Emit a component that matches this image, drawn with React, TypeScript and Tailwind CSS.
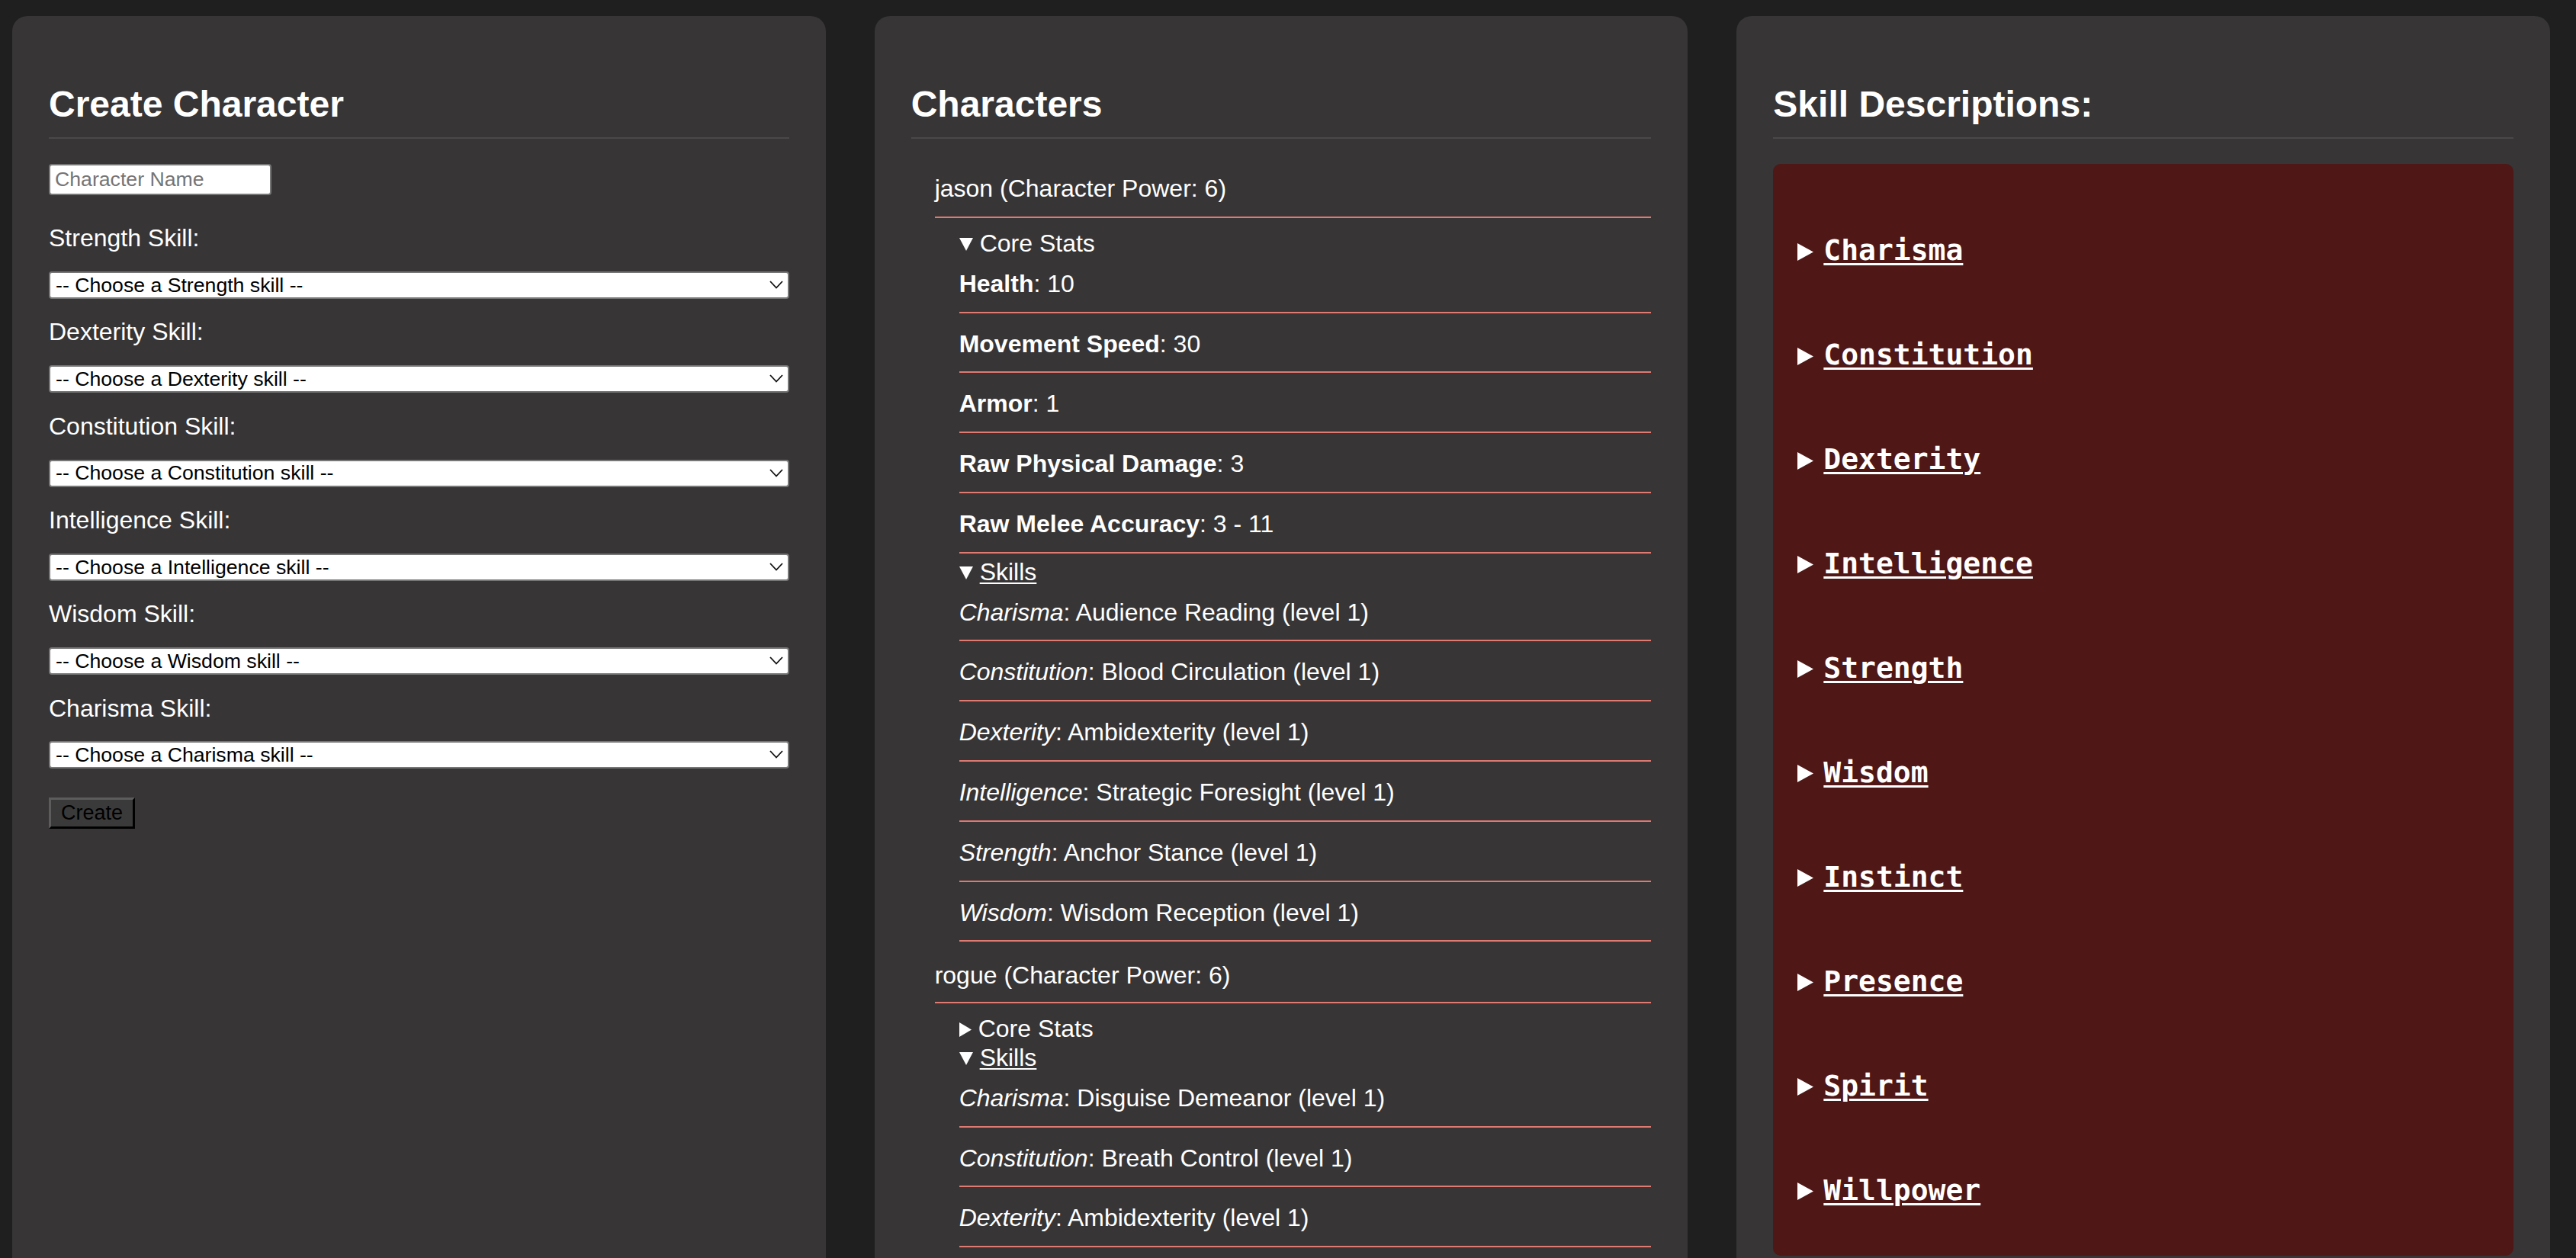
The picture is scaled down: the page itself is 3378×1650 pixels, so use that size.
const stats = [
  ['Health', '10'],
  ['Movement Speed', '30'],
  ['Armor', '1'],
  ['Raw Physical Damage', '3'],
  ['Raw Melee Accuracy', '3 - 11'],
];

const characters = [
  {
    name: 'jason',
    power: 6,
    statsOpen: true,
    skills: [
      ['Charisma', 'Audience Reading'],
      ['Constitution', 'Blood Circulation'],
      ['Dexterity', 'Ambidexterity'],
      ['Intelligence', 'Strategic Foresight'],
      ['Strength', 'Anchor Stance'],
      ['Wisdom', 'Wisdom Reception'],
    ],
  },
  {
    name: 'rogue',
    power: 6,
    statsOpen: false,
    skills: [
      ['Charisma', 'Disguise Demeanor'],
      ['Constitution', 'Breath Control'],
      ['Dexterity', 'Ambidexterity'],
    ],
  },
];

const attributes = ['Strength', 'Dexterity', 'Constitution', 'Intelligence', 'Wisdom', 'Charisma'];

const descriptions = [
  'Charisma',
  'Constitution',
  'Dexterity',
  'Intelligence',
  'Strength',
  'Wisdom',
  'Instinct',
  'Presence',
  'Spirit',
  'Willpower',
];

function PanelTitle({ children }: { children: React.ReactNode }) {
  return (
    <h2 className="mt-[40px] mb-[33px] pb-[16px] border-b-2 border-[#4a4849] text-[48px] font-bold">
      {children}
    </h2>
  );
}

function TriDown() {
  return (
    <svg width="18" height="17" viewBox="0 0 18 17" className="shrink-0 translate-y-[1px]">
      <path d="M0 0h18L9 17z" fill="white" />
    </svg>
  );
}

function TriRight({ w = 16, h = 19 }: { w?: number; h?: number }) {
  return (
    <svg width={w} height={h} viewBox={`0 0 ${w} ${h}`} className="shrink-0 translate-y-[1px]">
      <path d={`M0 0L${w} ${h / 2}L0 ${h}z`} fill="white" />
    </svg>
  );
}

function Row({ first, children }: { first?: boolean; children: React.ReactNode }) {
  return (
    <li className={`${first ? 'pt-[16px]' : 'pt-[22px]'} pb-[18px] border-b-2 border-[#df7a72]`}>
      {children}
    </li>
  );
}

export default function App() {
  return (
    <div className="h-[1650px] overflow-hidden bg-[#1f1f1f] text-white font-['Liberation_Sans',Arial,sans-serif] text-[32px] leading-[1.15]">
      <div className="grid grid-cols-3 gap-x-[64px] pl-[16px] pr-[34px] pt-[21px]">
        {/* create form */}
        <section className="min-h-[1700px] rounded-[20px] bg-[#373536] px-[48px] pt-[48px]">
          <PanelTitle>Create Character</PanelTitle>
          <input
            placeholder="Character Name"
            className="block w-[292px] h-[41px] rounded-[4px] border-2 border-[#767676] bg-white px-[6px] text-[26.67px] text-black placeholder:text-[#757575]"
          />
          <div className="mt-[12.5px]">
            {attributes.map((a) => (
              <div key={a} className="pt-[25.5px]">
                <label className="block">{a} Skill:</label>
                <div className="relative mt-[25px]">
                  <select className="block w-full h-[36px] appearance-none rounded-[4px] border-2 border-[#767676] bg-white pl-[7px] text-[26.67px] text-black">
                    <option>-- Choose a {a} skill --</option>
                  </select>
                  <svg
                    viewBox="0 0 18 11"
                    className="pointer-events-none absolute right-[8px] top-[12px] w-[18px] h-[11px]"
                  >
                    <path d="M1 1l8 8.5L17 1" stroke="#111" strokeWidth="1.8" fill="none" />
                  </svg>
                </div>
              </div>
            ))}
          </div>
          <button className="mt-[38px] h-[41px] px-[13px] bg-[#3a3a3a] text-black text-[27px] border-[3px] border-t-[#5c5c5c] border-l-[#5c5c5c] border-b-black border-r-black">
            Create
          </button>
        </section>

        {/* characters */}
        <section className="min-h-[1700px] rounded-[20px] bg-[#373536] px-[48px] pt-[48px]">
          <PanelTitle>Characters</PanelTitle>
          <ul className="pl-[31px]">
            {characters.map((c, ci) => (
              <li key={c.name}>
                <div
                  className={`${ci === 0 ? 'pt-[14px] pb-[18px]' : 'pt-[26px] pb-[16px]'} border-b-2 border-[#df7a72]`}
                >
                  {c.name} (Character Power: {c.power})
                </div>
                <div className="pl-[32px]">
                  <div className="mt-[15px] flex items-center gap-[9px]">
                    {c.statsOpen ? <TriDown /> : <TriRight />}
                    <span>Core Stats</span>
                  </div>
                  {c.statsOpen && (
                    <ul>
                      {stats.map(([k, v], i) => (
                        <Row key={k} first={i === 0}>
                          <b>{k}</b>: {v}
                        </Row>
                      ))}
                    </ul>
                  )}
                  <div className={`${c.statsOpen ? 'mt-[6px]' : 'mt-[1px]'} flex items-center gap-[9px]`}>
                    <TriDown />
                    <span className="underline decoration-2 underline-offset-[3px]">Skills</span>
                  </div>
                  <ul>
                    {c.skills.map(([k, v], i) => (
                      <Row key={k} first={i === 0}>
                        <i>{k}</i>: {v} (level 1)
                      </Row>
                    ))}
                  </ul>
                </div>
              </li>
            ))}
          </ul>
        </section>

        {/* skill descriptions */}
        <section className="min-h-[1700px] rounded-[20px] bg-[#373536] px-[48px] pt-[48px]">
          <PanelTitle>Skill Descriptions:</PanelTitle>
          <div className="flex flex-col gap-[93.3px] rounded-[10px] bg-[#4f1716] pl-[32px] pt-[92px] pb-[63px] font-['DejaVu_Sans_Mono',monospace] text-[38px] font-bold">
            {descriptions.map((d) => (
              <div key={d} className="flex items-center gap-[13px]">
                <TriRight w={21} h={23} />
                <span className="underline decoration-[3px] underline-offset-[4px]">{d}</span>
              </div>
            ))}
          </div>
        </section>
      </div>
    </div>
  );
}
